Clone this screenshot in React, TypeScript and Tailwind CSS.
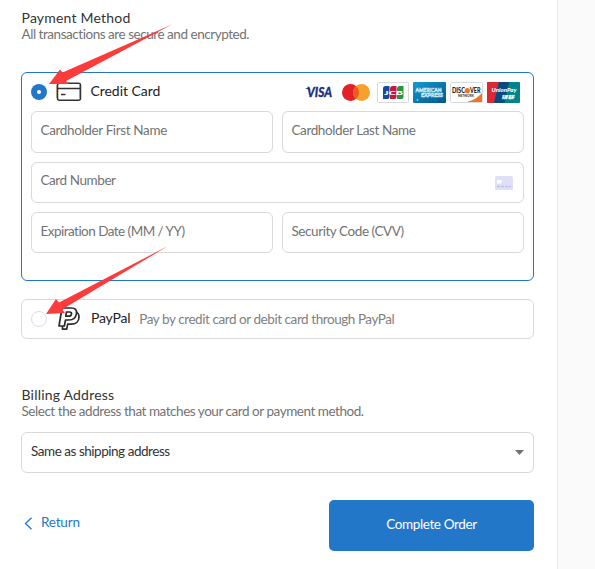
import React from 'react'

const FIELD = 'rounded-md border border-[#d9d9d9] bg-white px-[8.5px] text-[13.5px] leading-[36px] text-[#737373]'

function SectionTitle({ title, subtitle }: { title: string; subtitle: string }) {
    return (
        <div className="pl-[0.5px]">
            <h2 className="text-sm leading-4 tracking-[0.2px] text-[#333]">{title}</h2>
            <p className="text-[13.5px] leading-4 tracking-[-0.46px] text-[#737373]">{subtitle}</p>
        </div>
    )
}

function CreditCardIcon() {
    return (
        <svg width="26" height="20" viewBox="0 0 26 20" fill="none" stroke="#333" strokeWidth="1.5">
            <path d="M.8 3v13M23.700 3v13" stroke="#e9a050" strokeWidth="1" />
            <rect x="1.500" y="1.200" width="23" height="17" rx="2" />
            <path d="M1.500 6.500h23M5 12.500h4.500" />
        </svg>
    )
}

function PayPalIcon() {
    return (
        <svg width="24" height="24" viewBox="0 0 24 24" fill="none" stroke="#2b2b2b" strokeWidth="1.700" strokeLinejoin="round">
            <path d="M5.500 19v3.200h4.200l1-5h3.500c4.500 0 7.800-2.600 7.800-7.300 0-2.500-1.200-4.400-3.500-5.200" />
            <path fill="#fff" d="M5 1h9.500c3.600 0 5.500 2 5 5.500-.6 4.200-3.300 6.500-7.500 6.500H8.500L7.400 19H2L5 1Z" />
            <path d="M9.500 5h3c1.600 0 2.300.8 2 2-.3 1.500-1.300 2.200-2.800 2.200H8.800L9.500 5Z" />
        </svg>
    )
}

function CardLogos() {
    return (
        <svg width="216" height="22" viewBox="0 0 216 22" fontFamily="Lato, sans-serif" fontWeight="900">
            {/* Visa */}
            <text x="3" y="15" fontSize="13" fontStyle="italic" fill="#1b2f83" stroke="#1b2f83" strokeWidth=".3" textLength="25" lengthAdjust="spacingAndGlyphs">VISA</text>
            <path d="M1 6h4.500l1 2.500Z" fill="#1b2f83" />
            {/* Mastercard */}
            <circle cx="46.500" cy="10.500" r="8.500" fill="#e41f26" />
            <circle cx="57.500" cy="10.500" r="8.500" fill="#f6a02d" />
            <path d="M52 4a8.500 8.500 0 0 1 0 13 8.500 8.500 0 0 1 0-13Z" fill="#ef5a20" />
            {/* JCB */}
            <rect x="73.500" y=".5" width="31" height="20" rx="1" fill="#fff" stroke="#d5dadd" />
            <path d="M82 4h3.500v11a2 2 0 0 1-2 2H79V6.500A2.500 2.500 0 0 1 82 4Z" fill="#174a9c" />
            <path d="M89 4h3.500v11a2 2 0 0 1-2 2H86V6.500A2.500 2.500 0 0 1 89 4Z" fill="#c3193e" />
            <path d="M96 4h3.500v11a2 2 0 0 1-2 2H93V6.500A2.500 2.500 0 0 1 96 4Z" fill="#27963e" />
            <text x="80" y="12.500" fontSize="5.500" fill="#fff" textLength="19" lengthAdjust="spacingAndGlyphs">JCB</text>
            {/* American Express */}
            <defs>
                <linearGradient id="amex" x1="0" y1="0" x2="1" y2="1">
                    <stop offset="0" stopColor="#159bd0" />
                    <stop offset="1" stopColor="#00578c" />
                </linearGradient>
            </defs>
            <rect x="109" width="33" height="21" rx="1" fill="url(#amex)" />
            <g fontSize="5.500" fill="#0877ad" stroke="#d5edf7" strokeWidth=".6">
                <text x="111.500" y="10" textLength="26" lengthAdjust="spacingAndGlyphs">AMERICAN</text>
                <text x="117" y="15" textLength="22" lengthAdjust="spacingAndGlyphs">EXPRESS</text>
            </g>
            <circle cx="113.500" cy="18" r="1" fill="#8bc9e6" />
            {/* Discover */}
            <rect x="146.500" y=".5" width="32" height="20" rx="1" fill="#fff" stroke="#d5dadd" />
            <path d="M178 11v9h-15c6-1.500 11-4.500 15-9Z" fill="#f47424" />
            <text x="148" y="11" fontSize="6.500" fill="#222" textLength="13" lengthAdjust="spacingAndGlyphs">DISC</text>
            <circle cx="163.300" cy="8.700" r="2.600" fill="#f47424" />
            <text x="166" y="11" fontSize="6.500" fill="#222" textLength="10.500" lengthAdjust="spacingAndGlyphs">VER</text>
            <text x="154" y="15" fontSize="3.200" fill="#333" textLength="16" lengthAdjust="spacingAndGlyphs">NETWORK</text>
            {/* UnionPay */}
            <rect x="183" width="33" height="21" rx="1" fill="#008389" />
            <path d="M184 0h11l-5 21h-6a1 1 0 0 1-1-1V1a1 1 0 0 1 1-1Z" fill="#dc2834" />
            <path d="M195 0h10l-4.500 21H190Z" fill="#064a82" />
            <g fill="#fff" fontStyle="italic">
                <text x="187.500" y="10" fontSize="6" textLength="25" lengthAdjust="spacingAndGlyphs">UnionPay</text>
                <text x="197" y="17" fontSize="5" fontFamily="'Noto Sans CJK SC', sans-serif" textLength="13" lengthAdjust="spacingAndGlyphs">银联</text>
            </g>
        </svg>
    )
}

function CardNumberIcon() {
    return (
        <svg width="18" height="14" viewBox="0 0 18 14">
            <rect width="18" height="14" rx="1.500" fill="#dfe0f8" />
            <rect x="2" y="4" width="4.500" height="3.500" rx=".5" fill="#fff" />
            <path d="M2 10.500h14" stroke="#bfc2e8" strokeWidth="1.300" strokeDasharray="3 1" />
        </svg>
    )
}

/* Red pointers that sit over both payment options */
function Pointers() {
    return (
        <svg className="pointer-events-none absolute top-0 left-0" width="595" height="569" fill="#fc3b3a">
            <path d="M49 84 60 69.500 62.500 72.500 172 24.500 66 81 69 84Z" />
            <path d="M46 314 56 299 59 302.500 168 246 62 309.500 65 313Z" />
        </svg>
    )
}

export default function App() {
    return (
        <div className="relative flex h-[569px] w-[595px] overflow-hidden bg-white font-['Lato',sans-serif]">
            <main className="w-[557px] pt-[10px] pr-[23px] pl-[21px]">
                <SectionTitle title="Payment Method" subtitle="All transactions are secure and encrypted." />

                <section className="mt-[30px] h-[209px] rounded-md border border-[#2277c9] px-[9px]">
                    <div className="flex h-[38px] items-center">
                        <span className="flex size-4 items-center justify-center rounded-full bg-[#2277c9]">
                            <span className="size-1 rounded-full bg-white" />
                        </span>
                        <span className="ml-[9px]"><CreditCardIcon /></span>
                        <span className="ml-[8.5px] pb-0.5 text-sm tracking-[-0.05px] text-[#222]">Credit Card</span>
                        <span className="mr-[4px] ml-auto pt-0.5"><CardLogos /></span>
                    </div>
                    <div className="grid grid-cols-2 grid-rows-[42px_41px_41px] gap-[9px]">
                        <div className={`${FIELD} tracking-[-0.36px]`}>Cardholder First Name</div>
                        <div className={`${FIELD} tracking-[-0.4px]`}>Cardholder Last Name</div>
                        <div className={`${FIELD} col-span-2 flex justify-between tracking-[-0.43px]`}>
                            <span className="-mt-px">Card Number</span>
                            <span className="mr-[1.5px] self-center"><CardNumberIcon /></span>
                        </div>
                        <div className={`${FIELD} tracking-[-0.53px]`}>Expiration Date (MM / YY)</div>
                        <div className={`${FIELD} tracking-[-0.43px]`}>Security Code (CVV)</div>
                    </div>
                </section>

                <section className="mt-[18px] flex h-10 items-center rounded-md border border-[#d9d9d9] px-[9px]">
                    <span className="size-4 rounded-full border border-[#dcdce8]" />
                    <span className="ml-[10px]"><PayPalIcon /></span>
                    <span className="ml-[10px] pb-0.5 text-sm tracking-[-0.2px] text-[#222]">PayPal</span>
                    <span className="ml-[9px] text-[13.5px] tracking-[-0.44px] text-[#808080]">Pay by credit card or debit card through PayPal</span>
                </section>

                <div className="mt-12">
                    <SectionTitle title="Billing Address" subtitle="Select the address that matches your card or payment method." />
                </div>
                <div className="mt-[13px] flex h-[41px] items-center justify-between rounded-md border border-[#d9d9d9] px-[9px] text-[13.5px] tracking-[-0.47px] text-[#333]">
                    <span className="pb-[3px]">Same as shipping address</span>
                    <svg width="9" height="5" viewBox="0 0 9 5"><path d="M0 0h9L4.500 5Z" fill="#737373" /></svg>
                </div>

                <div className="mt-[27px] flex items-center justify-between">
                    <a className="flex items-center gap-2 pb-1.5 pl-[3px] text-[13.5px] tracking-[-0.2px] text-[#2277c9]">
                        <svg className="mt-px" width="9" height="13" viewBox="0 0 9 13" fill="none" stroke="currentColor" strokeWidth="1.300"><path d="M7.500.700 1.500 6.500l6 5.800" /></svg>
                        Return
                    </a>
                    <button className="h-[51px] w-[205px] rounded-[5px] bg-[#2277c9] pb-[3px] text-[13.5px] tracking-[-0.38px] text-white">Complete Order</button>
                </div>
            </main>
            <aside className="flex-1 border-l border-[#ebebeb] bg-[#fafafa]" />
            <Pointers />
        </div>
    )
}
